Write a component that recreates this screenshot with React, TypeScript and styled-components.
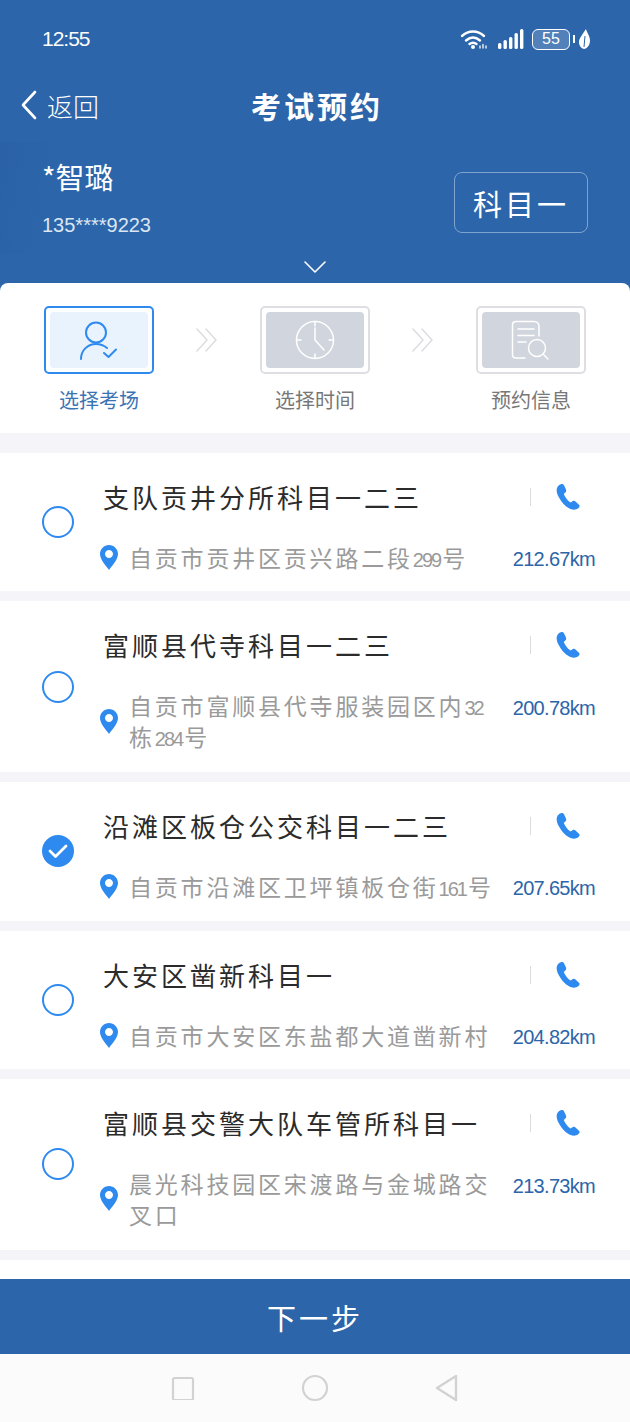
import React from 'react';
import styled, { createGlobalStyle } from 'styled-components';

const BLUE = '#2c65a9';
const ACCENT = '#2f8af0';

const GlobalStyle = createGlobalStyle`
  html, body {
    margin: 0;
    padding: 0;
    background: #f4f4f9;
  }
  body {
    font-family: "Noto Sans CJK SC", "Noto Sans", sans-serif;
  }
  * {
    box-sizing: border-box;
  }
`;

type Station = {
  name: string
  address: string
  distance: string
  tall?: boolean
  checked?: boolean
}

const stations: Station[] = [
  { name: '支队贡井分所科目一二三', address: '自贡市贡井区贡兴路二段299号', distance: '212.67km' },
  { name: '富顺县代寺科目一二三', address: '自贡市富顺县代寺服装园区内32栋284号', distance: '200.78km', tall: true },
  { name: '沿滩区板仓公交科目一二三', address: '自贡市沿滩区卫坪镇板仓街161号', distance: '207.65km', checked: true },
  { name: '大安区凿新科目一', address: '自贡市大安区东盐都大道凿新村', distance: '204.82km' },
  { name: '富顺县交警大队车管所科目一', address: '晨光科技园区宋渡路与金城路交叉口', distance: '213.73km', tall: true },
];

const WifiIcon = () => (
  <svg width="28" height="22" viewBox="0 0 28 22" fill="none" stroke="#fff" strokeLinecap="round" strokeWidth="2.400">
    <path d="M2 8C8.500 2 17.500 2 24 8" />
    <path d="M6 12.500C10.500 8.500 15.500 8.500 20 12.500" />
    <path d="M9.500 16C11.500 14.500 14.500 14.500 16.500 16" />
    <circle cx="13" cy="19" r="2" fill="#fff" stroke="none" />
    <path d="M20 20V18M23 20V16.500M26 20V18" strokeWidth="1.300" />
  </svg>
);

const SignalIcon = () => (
  <svg width="26" height="20" viewBox="0 0 26 20" fill="#fff">
    <rect x="0" y="14" width="3.400" height="6" rx="1.500" />
    <rect x="5.500" y="11" width="3.400" height="9" rx="1.500" />
    <rect x="11" y="8" width="3.400" height="12" rx="1.500" />
    <rect x="16.500" y="4" width="3.400" height="16" rx="1.500" />
    <rect x="22" y="0" width="3.400" height="20" rx="1.500" />
  </svg>
);

const LeafIcon = () => (
  <svg width="11" height="20" viewBox="0 0 11 20" fill="#fff">
    <path d="M7 0C8 4 11 7 11 11.500C11 16 8.500 19 5.500 20C2 19.500 0 16.500 0 13C0 9 4 5 7 0Z" />
    <path d="M6 7L5 18" stroke={BLUE} strokeWidth="1" fill="none" />
  </svg>
);

const BackIcon = () => (
  <svg width="18" height="30" viewBox="0 0 18 30" fill="none" stroke="#fff" strokeWidth="2.600" strokeLinecap="round" strokeLinejoin="round">
    <path d="M15 2L3 15L15 28" />
  </svg>
);

const ChevronDown = () => (
  <svg width="24" height="14" viewBox="0 0 24 14" fill="none" stroke="#fff" strokeWidth="1.600" strokeLinecap="round" strokeLinejoin="round">
    <path d="M2 2L12 12L22 2" />
  </svg>
);

const PersonIcon = () => (
  <svg width="38" height="39" viewBox="0 0 38 39" fill="none" stroke={ACCENT} strokeWidth="2" strokeLinecap="round" strokeLinejoin="round">
    <circle cx="16" cy="11.500" r="10" />
    <path d="M1 38C1 29 8 23 16 23C20 23 24 24.500 27 27" />
    <path d="M24 32L28.500 36L36 28.500" />
  </svg>
);

const ClockIcon = () => (
  <svg width="40" height="40" viewBox="0 0 40 40" fill="none" stroke="#fff" strokeWidth="1.500" strokeLinecap="round" strokeLinejoin="round">
    <circle cx="20" cy="20" r="18.500" />
    <path d="M20 1.500V6M20 34V38.500M1.500 20H6M34 20H38.500" />
    <path d="M20 8V20L29 30" />
  </svg>
);

const DocSearchIcon = () => (
  <svg width="40" height="40" viewBox="0 0 40 40" fill="none" stroke="#fff" strokeWidth="1.500" strokeLinecap="round" strokeLinejoin="round">
    <path d="M14 38H5C3 38 1.500 36.500 1.500 34.500V5C1.500 3 3 1.500 5 1.500H23C26 1.500 28 3.500 28 6V16" />
    <path d="M7 9H23M7 15.500H23M7 22H15" />
    <circle cx="26" cy="28" r="8.500" />
    <path d="M32.500 34.500L37 39" />
  </svg>
);

const DoubleChevron = () => (
  <svg width="22" height="24" viewBox="0 0 22 24" fill="none" stroke="#dcdde0" strokeWidth="1.500" strokeLinecap="round" strokeLinejoin="round">
    <path d="M1 1L11 12L1 23" />
    <path d="M10 1L20 12L10 23" />
  </svg>
);

const PhoneIcon = () => (
  <svg width="24" height="26" viewBox="0 0 24 26" fill={ACCENT}>
    <path d="M1 4C0.300 6 0.500 9 3 13.500C6 19 10.500 23.500 14.500 25C17.500 26 20 25.800 22 24.500C23.500 23.500 24 22 23.200 21L19.500 17.500C18.500 16.700 17.500 16.700 16.500 17.300L14.500 18.500C12 17 8.800 12.800 7.800 10L9.500 8.300C10.300 7.500 10.300 6.500 10 5.500L8 1.300C7.400 0.200 6 -0.200 4.800 0.200C3 0.700 1.600 2.300 1 4Z" />
  </svg>
);

const PinIcon = () => (
  <svg width="18" height="25" viewBox="0 0 18 25" fill={ACCENT}>
    <path fillRule="evenodd" d="M9 0C4 0 0 4 0 9C0 14.500 5.500 20 9 25C12.500 20 18 14.500 18 9C18 4 14 0 9 0ZM9 5C11.200 5 13 6.800 13 9C13 11.200 11.200 13 9 13C6.800 13 5 11.200 5 9C5 6.800 6.800 5 9 5Z" />
  </svg>
);

const Page = styled.div`
  width: 630px;
  height: 1422px;
  display: flex;
  flex-direction: column;
  overflow: hidden;
  background: #f4f4f9;
`;

const Header = styled.header`
  height: 297px;
  flex: none;
  background: ${BLUE};
  color: #fff;
  display: flex;
  flex-direction: column;
`;

const StatusBar = styled.div`
  height: 70px;
  padding: 8px 40px 0 42px;
  display: flex;
  align-items: center;
  justify-content: space-between;
`;

const Clock = styled.span`
  font-size: 21px;
  line-height: 24px;
  font-family: "Liberation Sans", sans-serif;
  letter-spacing: -1px;
`;

const StatusIcons = styled.div`
  display: flex;
  align-items: center;
`;

const WifiSlot = styled.span`
  display: flex;
  margin-right: 10px;
`;

const Battery = styled.div`
  width: 38px;
  height: 21px;
  margin: 0 9px 0 8px;
  border: 1.500px solid #fff;
  border-radius: 6px;
  background: rgba(255, 255, 255, 0.18);
  font-size: 16px;
  line-height: 18px;
  text-align: center;
  font-family: "Liberation Sans", sans-serif;
  position: relative;
  &::after {
    content: '';
    position: absolute;
    right: -6px;
    top: 5px;
    width: 2px;
    height: 8px;
    background: #fff;
  }
`;

const NavBar = styled.div`
  height: 74px;
  padding: 0 20px;
  display: grid;
  grid-template-columns: 1fr auto 1fr;
  align-items: center;
  margin-top: -2px;
`;

const BackLink = styled.div`
  display: flex;
  align-items: center;
  gap: 9px;
  font-size: 26px;
  font-weight: 300;
`;

const NavTitle = styled.h1`
  margin: 0;
  padding-left: 4px;
  font-size: 30px;
  line-height: 40px;
  font-weight: 700;
  letter-spacing: 3px;
`;

const UserRow = styled.div`
  height: 112px;
  padding: 0 42px;
  display: flex;
  align-items: center;
  justify-content: space-between;
  background: linear-gradient(100deg, #2b62a7, ${BLUE} 60px);
`;

const UserInfo = styled.div`
  padding-top: 5px;
`;

const UserName = styled.div`
  font-size: 29px;
  line-height: 36px;
  margin-top: -6px;
`;

const UserPhone = styled.div`
  margin-top: 18px;
  font-size: 20px;
  line-height: 26px;
  color: #dbe6f3;
  font-family: "Liberation Sans", sans-serif;
`;

const SubjectBadge = styled.div`
  width: 134px;
  height: 61px;
  border: 1.500px solid #7ea3cf;
  border-radius: 8px;
  display: flex;
  align-items: center;
  justify-content: center;
  font-size: 29px;
  letter-spacing: 3px;
  margin-top: 9px;
`;

const ExpandRow = styled.div`
  height: 26px;
  display: flex;
  justify-content: center;
  padding-top: 6px;
`;

const Steps = styled.section`
  height: 150px;
  flex: none;
  margin-top: -14px;
  background: #fff;
  border-radius: 8px 8px 0 0;
  padding: 23px 44px 0;
  display: grid;
  grid-template-columns: 110px 1fr 110px 1fr 110px;
  align-items: start;
`;

const Step = styled.div`
  display: flex;
  flex-direction: column;
  align-items: center;
`;

const StepFrame = styled.div<{ $active?: boolean }>`
  width: 110px;
  height: 68px;
  padding: 4px;
  border: 2px solid ${p => (p.$active ? ACCENT : '#dddfe3')};
  border-radius: 5px;
  background: #fff;
`;

const StepFace = styled.div<{ $active?: boolean }>`
  height: 100%;
  border-radius: 4px;
  background: ${p => (p.$active ? '#e9f3fe' : '#d1d5dd')};
  display: flex;
  align-items: center;
  justify-content: center;
`;

const StepLabel = styled.div<{ $active?: boolean }>`
  margin-top: 12px;
  font-size: 20px;
  line-height: 28px;
  color: ${p => (p.$active ? '#3a74b4' : '#777')};
  white-space: nowrap;
`;

const StepArrow = styled.div`
  height: 68px;
  display: flex;
  align-items: center;
  justify-content: center;
`;

const List = styled.main`
  flex: 1;
  min-height: 0;
  margin-top: 20px;
  display: flex;
  flex-direction: column;
  gap: 10px;
`;

const Card = styled.article<{ $tall?: boolean }>`
  flex: none;
  height: ${p => (p.$tall ? 170.8 : 138.4)}px;
  background: #fff;
  display: grid;
  grid-template-columns: 61px 1fr;
  align-items: center;
  padding: 0 35px 0 42px;
`;

const Radio = styled.div<{ $checked?: boolean }>`
  width: 32px;
  height: 32px;
  border-radius: 50%;
  border: ${p => (p.$checked ? 'none' : `2px solid ${ACCENT}`)};
  background: ${p => (p.$checked ? ACCENT : '#fff')};
  display: flex;
  align-items: center;
  justify-content: center;
`;

const CardBody = styled.div`
  display: flex;
  flex-direction: column;
  align-self: stretch;
  padding-top: 24px;
`;

const TitleRow = styled.div`
  display: flex;
  align-items: center;
  justify-content: space-between;
  height: 40px;
`;

const StationName = styled.h2`
  margin: 0;
  font-size: 26px;
  line-height: 40px;
  font-weight: 400;
  letter-spacing: 3px;
  color: #2b2b2b;
  white-space: nowrap;
`;

const PhoneCell = styled.div`
  display: flex;
  align-items: center;
  gap: 25px;
  padding-right: 15px;
`;

const Divider = styled.span`
  width: 1px;
  height: 18px;
  background: #dcdcdc;
`;

const AddressRow = styled.div<{ $tall?: boolean }>`
  margin-top: ${p => (p.$tall ? 25 : 23)}px;
  display: grid;
  grid-template-columns: 1fr auto;
  align-items: ${p => (p.$tall ? 'start' : 'center')};
  column-gap: 14px;
`;

const AddressMain = styled.div`
  display: flex;
  align-items: center;
  min-width: 0;
  gap: 11px;
  margin-left: -3px;
`;

const AddressText = styled.div`
  font-size: 23px;
  line-height: 31px;
  letter-spacing: 2.800px;
  color: #9a9a9a;
  overflow-wrap: anywhere;
  flex: 1;
`;

const Digits = styled.span`
  font-family: "Liberation Sans", sans-serif;
  font-size: 20px;
  line-height: 1;
  letter-spacing: -2px;
  margin-right: 2px;
`;

const Distance = styled.span<{ $tall?: boolean }>`
  padding-top: ${p => (p.$tall ? 3 : 4)}px;
  font-size: 20px;
  line-height: 31px;
  letter-spacing: -0.700px;
  color: ${BLUE};
  font-family: "Liberation Sans", sans-serif;
  white-space: nowrap;
`;

const Filler = styled.div`
  height: 40px;
  flex: none;
  background: #fff;
`;

const NextButton = styled.button`
  height: 75px;
  flex: none;
  width: 100%;
  border: 0;
  background: ${BLUE};
  color: #fff;
  font-family: inherit;
  font-size: 29px;
  letter-spacing: 3px;
`;

const SystemBar = styled.nav`
  height: 68px;
  flex: none;
  background: #fbfbfb;
  display: flex;
  align-items: center;
  justify-content: center;
  gap: 106px;
  padding-bottom: 1px;
`;

// the digits in the addresses are much narrower than the hanzi around them
const renderAddress = (address: string) =>
  address.split(/(\d+)/).map((part, i) => (/^\d+$/.test(part) ? <Digits key={i}>{part}</Digits> : part));

export default function App() {
  return (
    <Page>
      <GlobalStyle />
      <Header>
        <StatusBar>
          <Clock>12:55</Clock>
          <StatusIcons>
            <WifiSlot>
              <WifiIcon />
            </WifiSlot>
            <SignalIcon />
            <Battery>55</Battery>
            <LeafIcon />
          </StatusIcons>
        </StatusBar>
        <NavBar>
          <BackLink>
            <BackIcon />
            返回
          </BackLink>
          <NavTitle>考试预约</NavTitle>
          <span />
        </NavBar>
        <UserRow>
          <UserInfo>
            <UserName>*智璐</UserName>
            <UserPhone>135****9223</UserPhone>
          </UserInfo>
          <SubjectBadge>科目一</SubjectBadge>
        </UserRow>
        <ExpandRow>
          <ChevronDown />
        </ExpandRow>
      </Header>

      <Steps>
        <Step>
          <StepFrame $active>
            <StepFace $active>
              <PersonIcon />
            </StepFace>
          </StepFrame>
          <StepLabel $active>选择考场</StepLabel>
        </Step>
        <StepArrow>
          <DoubleChevron />
        </StepArrow>
        <Step>
          <StepFrame>
            <StepFace>
              <ClockIcon />
            </StepFace>
          </StepFrame>
          <StepLabel>选择时间</StepLabel>
        </Step>
        <StepArrow>
          <DoubleChevron />
        </StepArrow>
        <Step>
          <StepFrame>
            <StepFace>
              <DocSearchIcon />
            </StepFace>
          </StepFrame>
          <StepLabel>预约信息</StepLabel>
        </Step>
      </Steps>

      <List>
        {stations.map(s => (
          <Card key={s.name} $tall={s.tall}>
            <Radio $checked={s.checked}>
              {s.checked && (
                <svg width="20" height="16" viewBox="0 0 20 16" fill="none" stroke="#fff" strokeWidth="2.800" strokeLinecap="round" strokeLinejoin="round">
                  <path d="M2 8L7.500 13.500L18 3" />
                </svg>
              )}
            </Radio>
            <CardBody>
              <TitleRow>
                <StationName>{s.name}</StationName>
                <PhoneCell>
                  <Divider />
                  <PhoneIcon />
                </PhoneCell>
              </TitleRow>
              <AddressRow $tall={s.tall}>
                <AddressMain>
                  <PinIcon />
                  <AddressText>{renderAddress(s.address)}</AddressText>
                </AddressMain>
                <Distance $tall={s.tall}>{s.distance}</Distance>
              </AddressRow>
            </CardBody>
          </Card>
        ))}
        <Filler />
      </List>

      <NextButton>下一步</NextButton>
      <SystemBar>
        <svg width="24" height="24" viewBox="0 0 24 24" fill="none" stroke="#d2d2d2" strokeWidth="2.200" strokeLinejoin="round">
          <rect x="2" y="2" width="20" height="22" rx="1.500" />
        </svg>
        <svg width="28" height="28" viewBox="0 0 28 28" fill="none" stroke="#d2d2d2" strokeWidth="2.200">
          <circle cx="14" cy="14" r="12" />
        </svg>
        <svg width="24" height="28" viewBox="0 0 24 28" fill="none" stroke="#d2d2d2" strokeWidth="2.400" strokeLinejoin="round">
          <path d="M21 2V26L2 14Z" />
        </svg>
      </SystemBar>
    </Page>
  );
}
